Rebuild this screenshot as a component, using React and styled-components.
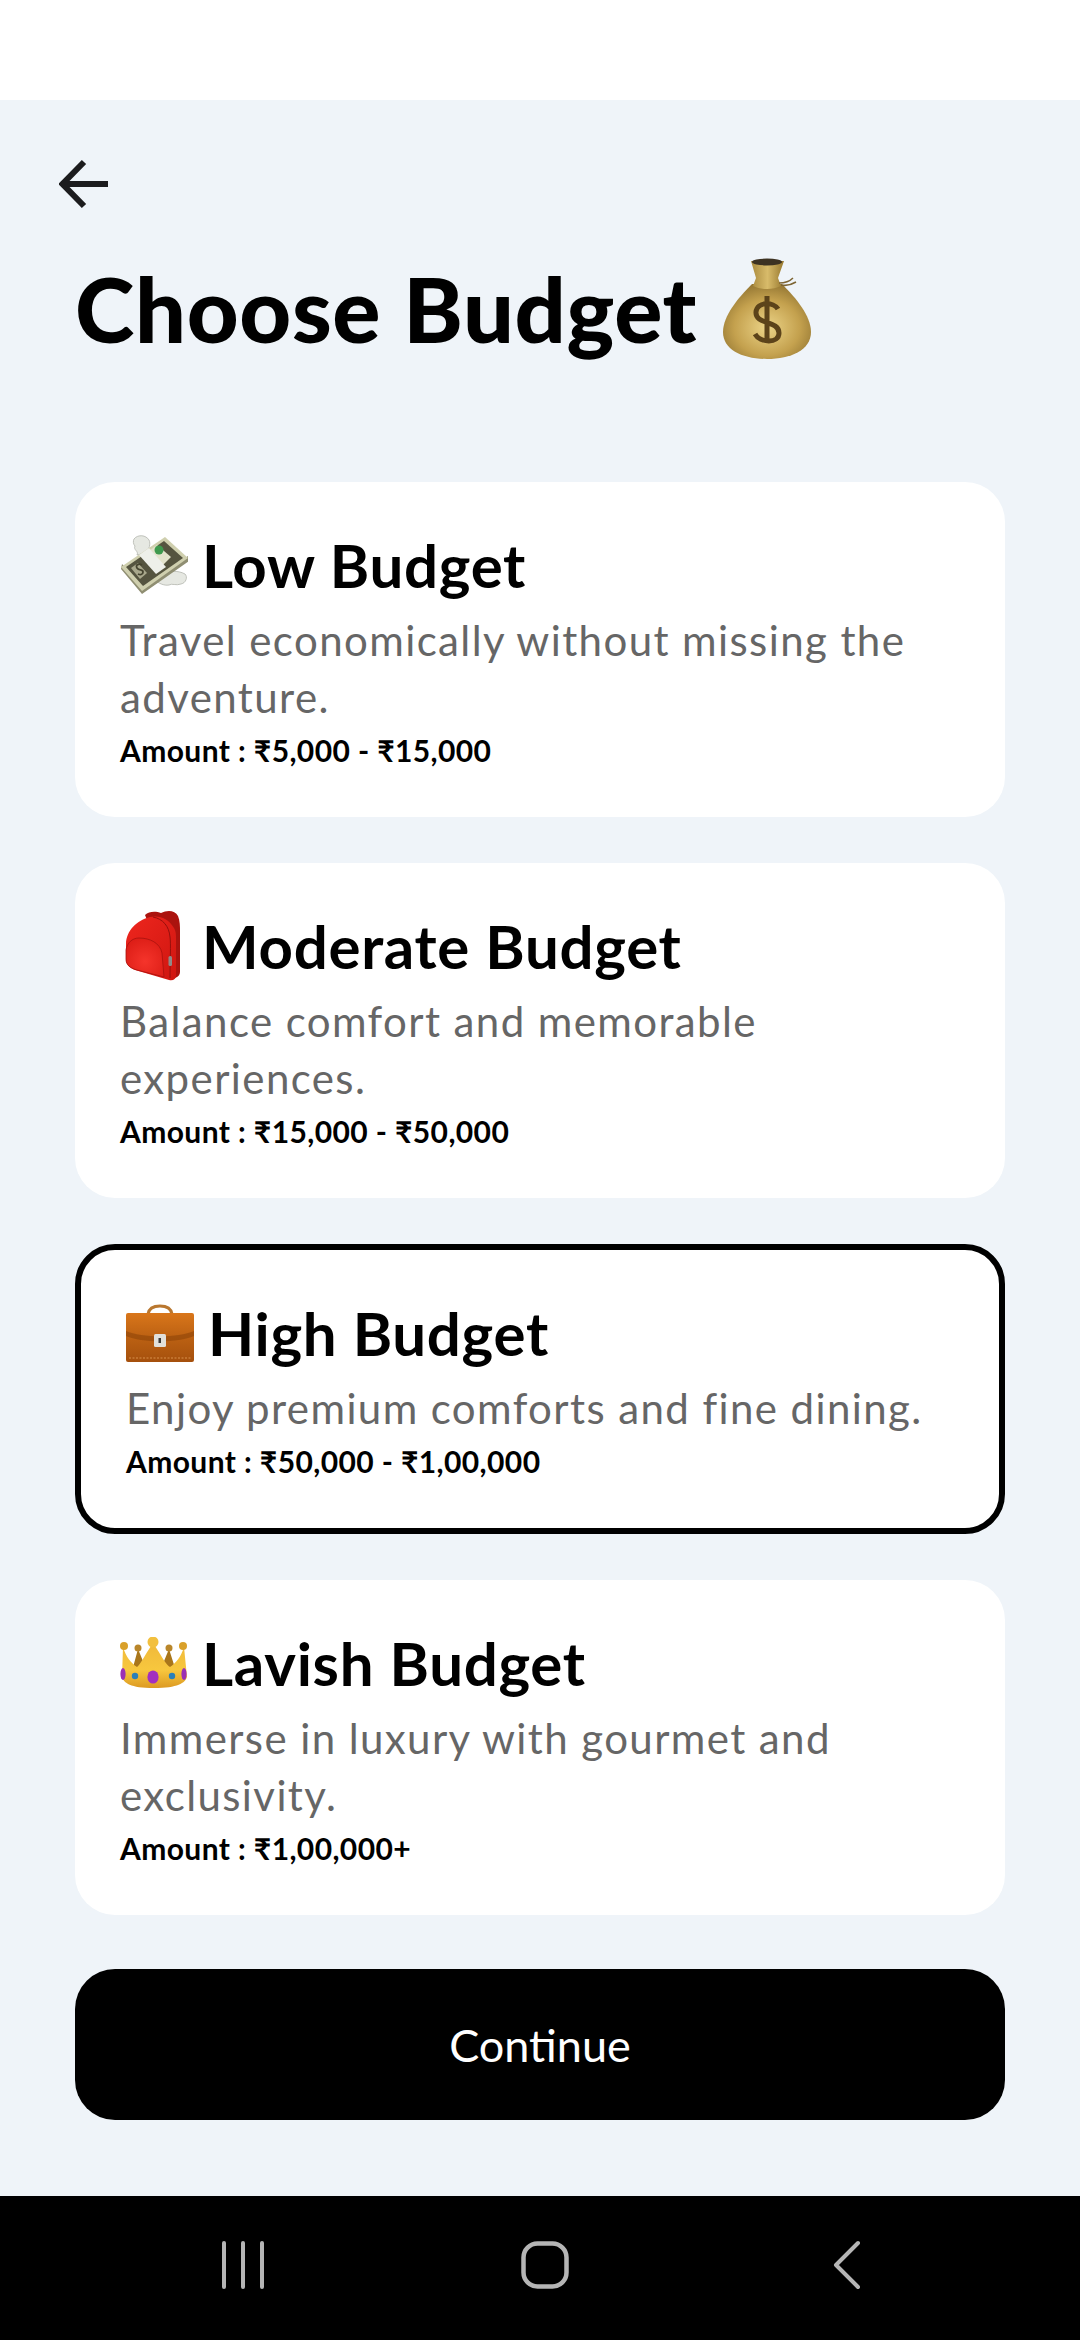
import React from "react";
import styled, { createGlobalStyle } from "styled-components";

const GlobalStyle = createGlobalStyle`
  html, body {
    margin: 0;
    padding: 0;
    background: #000;
  }
  * { box-sizing: border-box; }
`;

const MoneyBag = () => (
  <svg width="88" height="104" viewBox="0 0 88 104">
    <defs>
      <radialGradient id="bagBody" cx="50%" cy="58%" r="62%">
        <stop offset="0" stopColor="#ecd488" />
        <stop offset="0.6" stopColor="#c4a14e" />
        <stop offset="1" stopColor="#8f7230" />
      </radialGradient>
      <linearGradient id="bagNeck" x1="0" x2="1" y1="0" y2="0">
        <stop offset="0" stopColor="#a98a3e" />
        <stop offset="0.5" stopColor="#d8bb6a" />
        <stop offset="1" stopColor="#97782f" />
      </linearGradient>
    </defs>
    <path d="M29 28C15 42 0 60 0 76c0 18 20 27 44 27s44-9 44-27c0-16-15-34-29-48z" fill="url(#bagBody)" />
    <path d="M28 5h33l-6 17 3 8c-8 4-20 4-28 0l3-8z" fill="url(#bagNeck)" />
    <ellipse cx="44" cy="6" rx="15" ry="3.400" fill="#3d3222" />
    <path d="M56 27c6 0 10-1 14-5M58 29c5 1 10 0 15-3" fill="none" stroke="#7d6534" strokeWidth="1.500" />
    <path d="M55 53c-4-7-21-8-22 3-1 13 23 8 23 21 0 11-19 10-24 1M44 40v46" fill="none" stroke="#5c431a" strokeWidth="5" />
  </svg>
);

const FlyingMoney = () => (
  <svg width="68" height="60" viewBox="0 0 68 60">
    <path d="M14 4c4-5 12-4 15 1 2 4 0 9-3 13l-9 2c2-4-4-5-2-9-2-2-2-5-1-7z" fill="#e6e8e2" stroke="#b2b5ad" strokeWidth="0.800" />
    <path d="M40 38c8-2 18-3 25 1 3 3 1 9-4 10-5 2-9-1-12 1-5 1-11-2-14-5z" fill="#e6e8e2" stroke="#b2b5ad" strokeWidth="0.800" />
    <path d="M1 34L22 59l47-33-1-5L23 50 2 29z" fill="#8f8e72" />
    <path d="M1 32L45 2l23 21-46 33z" fill="#cfcfae" />
    <path d="M6 32L44 6l19 17-40 28z" fill="#55543f" />
    <path d="M30 15l7-5 14 12-8 8z" fill="#e3e3cc" />
    <circle cx="39" cy="15" r="4.500" fill="#3f9a4e" />
    <path d="M19 20l10-7 17 19-10 7z" fill="#eef0ea" />
    <path d="M11 33l7-5 9 10-7 6z" fill="#a9a88c" />
    <path d="M22 30c-3-2-7 0-5 3s6 1 6 4-3 3-5 2" fill="none" stroke="#45442f" strokeWidth="1.800" />
  </svg>
);

const Backpack = () => (
  <svg width="58" height="72" viewBox="0 0 58 72">
    <defs>
      <linearGradient id="packBody" x1="0" x2="1" y1="0" y2="1">
        <stop offset="0" stopColor="#ee261e" />
        <stop offset="1" stopColor="#cf1610" />
      </linearGradient>
      <radialGradient id="packPocket" cx="50%" cy="60%" r="65%">
        <stop offset="0" stopColor="#f5342b" />
        <stop offset="1" stopColor="#dc1d16" />
      </radialGradient>
    </defs>
    <path d="M20 5c4-4 11-4 16-2 6-3 14-3 17 3 2 5 2 10 2 16v40c0 3-2 5-5 6L30 30z" fill="#ab130e" />
    <path d="M25 7c9-2 18 1 24 11 2 3 2 7 2 12v36c0 3-3 5-7 4L10 60C5 58 1 55 1 49V34C1 21 12 10 25 7z" fill="url(#packBody)" />
    <path d="M1 40c1-7 6-12 13-12 11 0 21 5 23 15l2 24-27-7C5 58 1 55 1 49z" fill="url(#packPocket)" stroke="#a8120e" strokeWidth="0.800" />
    <path d="M28 7c10 2 16 9 17 20 1 6 0 26 0 41" fill="none" stroke="#96100c" strokeWidth="1" />
    <rect x="43.500" y="46" width="3.500" height="10" rx="1.500" fill="#8f8a88" />
  </svg>
);

const Briefcase = () => (
  <svg width="68" height="58" viewBox="0 0 68 58">
    <defs>
      <linearGradient id="caseBody" x1="0" x2="0" y1="0" y2="1">
        <stop offset="0" stopColor="#d9761a" />
        <stop offset="0.55" stopColor="#b95f12" />
        <stop offset="1" stopColor="#a5500d" />
      </linearGradient>
    </defs>
    <path d="M22 10c1-6 6-8 12-8s11 2 12 8" fill="none" stroke="#b9772f" strokeWidth="3" />
    <rect x="0" y="9" width="68" height="49" rx="2" fill="url(#caseBody)" />
    <path d="M0 27c16 7 52 7 68 0v5c-16 7-52 7-68 0z" fill="#8d4409" opacity="0.600" />
    <path d="M3 54h62" stroke="#e3a05a" strokeWidth="0.800" strokeDasharray="2 1.500" />
    <rect x="28" y="30" width="12" height="13" rx="1.500" fill="#e1e0da" />
    <rect x="32.500" y="34" width="2.500" height="5" fill="#3a3a38" />
  </svg>
);

const Crown = () => (
  <svg width="68" height="52" viewBox="0 0 68 52">
    <defs>
      <linearGradient id="crownGold" x1="0" x2="0" y1="0" y2="1">
        <stop offset="0" stopColor="#f0b93a" />
        <stop offset="0.6" stopColor="#f7c73e" />
        <stop offset="1" stopColor="#dc9a22" />
      </linearGradient>
    </defs>
    <path d="M18 12l-6 22h44l-7-22-7 17H25z" fill="#a9761a" />
    <path d="M3 10c3 10 8 16 14 20 3-2 6-9 16-24 10 15 13 22 17 24 6-4 11-10 14-20l3 30c-2 6-9 11-33 11S4 46 2 40z" fill="url(#crownGold)" />
    <circle cx="4" cy="9" r="4" fill="#d9a02a" />
    <circle cx="18" cy="11" r="3.500" fill="#b9862a" />
    <circle cx="33" cy="5" r="5.500" fill="#f2c03f" />
    <circle cx="49" cy="11" r="3.500" fill="#b9862a" />
    <circle cx="63" cy="9" r="4" fill="#d9a02a" />
    <ellipse cx="3" cy="37" rx="2.600" ry="6" fill="#9b2fb4" />
    <circle cx="15" cy="39" r="3.200" fill="#2a7fb8" />
    <ellipse cx="33" cy="40" rx="5.600" ry="6.600" fill="#a22fc0" />
    <circle cx="52" cy="39" r="3.200" fill="#2a7fb8" />
    <ellipse cx="64" cy="37" rx="2.600" ry="6" fill="#9b2fb4" />
  </svg>
);

const budgets = [
  { id: "low", icon: <FlyingMoney />, title: "Low Budget", desc: "Travel economically without missing the adventure.", amount: "Amount : ₹5,000 - ₹15,000" },
  { id: "moderate", icon: <Backpack />, title: "Moderate Budget", desc: "Balance comfort and memorable experiences.", amount: "Amount : ₹15,000 - ₹50,000" },
  { id: "high", icon: <Briefcase />, title: "High Budget", desc: "Enjoy premium comforts and fine dining.", amount: "Amount : ₹50,000 - ₹1,00,000", selected: true },
  { id: "lavish", icon: <Crown />, title: "Lavish Budget", desc: "Immerse in luxury with gourmet and exclusivity.", amount: "Amount : ₹1,00,000+" },
];

export default function App() {
  return (
    <Screen>
      <GlobalStyle />
      <StatusBar />
      <Main>
        <BackButton aria-label="Back">
          <svg width="50" height="50" viewBox="0 0 50 50" fill="none" stroke="#1c1c1e" strokeWidth="6">
            <path d="M49 25H4M25 3L3.500 25 25 47" />
          </svg>
        </BackButton>
        <Heading>
          Choose Budget
          <MoneyBag />
        </Heading>
        <CardList>
          {budgets.map((b) => (
            <Card key={b.id} $selected={b.selected}>
              <CardTitle>
                <EmojiSlot>{b.icon}</EmojiSlot>
                {b.title}
              </CardTitle>
              <CardDesc>{b.desc}</CardDesc>
              <CardAmount>{b.amount}</CardAmount>
            </Card>
          ))}
        </CardList>
        <ContinueButton>Continue</ContinueButton>
      </Main>
      <NavBar>
        <NavSlot>
          <svg width="46" height="48" viewBox="0 0 46 48" stroke="#b5b5b5" strokeWidth="4" strokeLinecap="round">
            <path d="M4 2v44M23 2v44M42 2v44" />
          </svg>
        </NavSlot>
        <NavSlot>
          <svg width="48" height="48" viewBox="0 0 48 48" fill="none" stroke="#b5b5b5" strokeWidth="4.500">
            <rect x="2.500" y="2.500" width="43" height="43" rx="14" />
          </svg>
        </NavSlot>
        <NavSlot>
          <svg width="28" height="50" viewBox="0 0 28 50" fill="none" stroke="#b5b5b5" strokeWidth="4" strokeLinecap="round" strokeLinejoin="round">
            <path d="M25 3L3 25l22 22" />
          </svg>
        </NavSlot>
      </NavBar>
    </Screen>
  );
}

const Screen = styled.div`
  width: 1080px;
  height: 2340px;
  display: flex;
  flex-direction: column;
  background: #eff4f9;
  font-family: "Lato", "Noto Sans", sans-serif;
  overflow: hidden;
`;

const StatusBar = styled.div`
  height: 100px;
  background: #fff;
`;

const Main = styled.main`
  flex: 1;
  padding: 59px 75px 0;
  display: flex;
  flex-direction: column;
`;

const BackButton = styled.button`
  width: 50px;
  height: 50px;
  margin-left: -16px;
  padding: 0;
  border: 0;
  background: none;
  display: flex;
`;

const Heading = styled.h1`
  margin: 39px 0 0;
  height: 120px;
  display: flex;
  align-items: center;
  gap: 26px;
  font-size: 90px;
  font-weight: 900;
  color: #000;
  letter-spacing: 0.65px;
  white-space: nowrap;
`;

const CardList = styled.div`
  margin-top: 114px;
  display: flex;
  flex-direction: column;
  gap: 46px;
`;

const Card = styled.div`
  padding: 45px;
  background: #fff;
  border-radius: 40px;
  border: ${(p) => (p.$selected ? "6px solid #000" : "0")};
`;

const CardTitle = styled.div`
  height: 85px;
  padding-bottom: 9px;
  display: flex;
  align-items: center;
  font-size: 60px;
  font-weight: 700;
  letter-spacing: 0.7px;
  color: #000;
  white-space: nowrap;
`;

const EmojiSlot = styled.span`
  width: 82px;
  display: flex;
  justify-content: center;
  padding-right: 14px;
`;

const CardDesc = styled.div`
  font-size: 42px;
  line-height: 57px;
  font-weight: 400;
  letter-spacing: 1.4px;
  color: #666;
`;

const CardAmount = styled.div`
  height: 46px;
  padding-top: 2px;
  line-height: 44px;
  font-size: 30px;
  font-weight: 700;
  letter-spacing: 0.4px;
  color: #000;
`;

const ContinueButton = styled.button`
  height: 151px;
  margin-top: 54px;
  border: 0;
  border-radius: 40px;
  background: #000;
  color: #fff;
  font-family: inherit;
  font-size: 45px;
  font-weight: 400;
`;

const NavBar = styled.nav`
  height: 144px;
  padding: 0 82px 7px 92px;
  background: #000;
  display: grid;
  grid-template-columns: repeat(3, 1fr);
`;

const NavSlot = styled.div`
  display: flex;
  align-items: center;
  justify-content: center;
`;
